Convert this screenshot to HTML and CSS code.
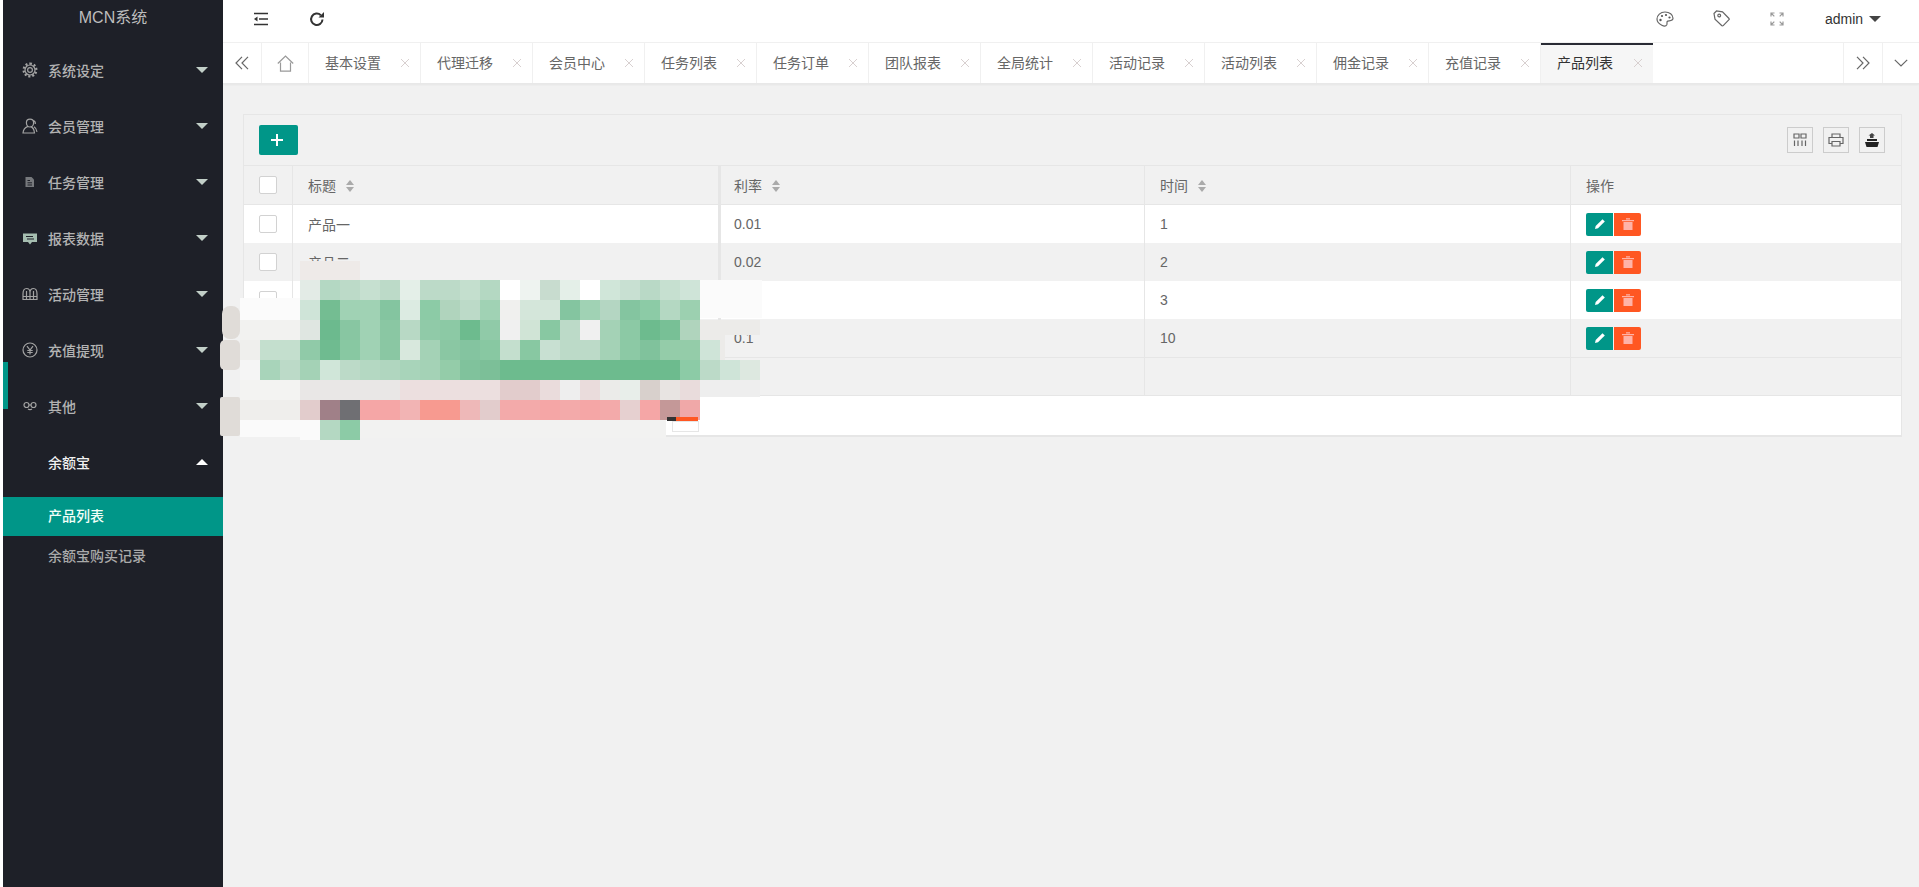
FILE: index.html
```html
<!DOCTYPE html>
<html lang="zh-CN">

<head>
    <meta charset="UTF-8">
    <title>MCN系统</title>
    <link rel="stylesheet" href="styles.css">
</head>

<body>
    <div class="side">
        <div class="logo">MCN系统</div>
        <ul class="nav">
            <li class="nav-item">
                <svg class="nav-ico" viewBox="0 0 16 16"><circle cx="8" cy="8" r="2.4"/><circle cx="8" cy="8" r="5"/><path stroke-width="2.2" stroke-dasharray="2 1.9" d="M8 1.6a6.4 6.4 0 1 1-.01 0"/></svg>
                <span>系统设定</span><i class="arrow"></i>
            </li>
            <li class="nav-item">
                <svg class="nav-ico" viewBox="0 0 16 16"><path d="M8 1.2c2.3 0 3.6 1.7 3.6 3.6S10.300 9 8 9 4.400 6.700 4.400 4.800 5.700 1.200 8 1.200zM5.800 8.400C3.300 9.400 1.300 11.500 1 15h11.500c-.3-3.500-1.600-5.600-4-6.600M11.500 2.500c1.500.6 2 2 1.800 3.500M12 8.800c1.600.9 2.700 2.800 3 5"/></svg>
                <span>会员管理</span><i class="arrow"></i>
            </li>
            <li class="nav-item">
                <svg class="nav-ico" viewBox="0 0 16 16"><path class="fill dim" d="M3.500 3h6l2.500 2.500V13H3.500z"/><path stroke="#1e2028" stroke-width="1" d="M5.500 6.500h2.500M5.500 8.800h4.500M5.500 11h4.500"/></svg>
                <span>任务管理</span><i class="arrow"></i>
            </li>
            <li class="nav-item">
                <svg class="nav-ico" viewBox="0 0 16 16"><path class="fill green" d="M1 3.500h14v8.500h-5l-2 2.500-2-2.500H1z"/><path stroke="#1e2028" d="M4 6.500h7M12 9H5"/></svg>
                <span>报表数据</span><i class="arrow"></i>
            </li>
            <li class="nav-item">
                <svg class="nav-ico" viewBox="0 0 16 16"><path d="M1 13.500V8c0-3 1.300-5.500 3.500-5.500S8 4 8 6.500C8 4 9.300 2.500 11.500 2.500S15 5 15 8v5.500zM8 6.500v7M4.500 5v8.500M11.500 5v8.500M1 10.500h14"/></svg>
                <span>活动管理</span><i class="arrow"></i>
            </li>
            <li class="nav-item">
                <svg class="nav-ico" viewBox="0 0 16 16"><circle cx="8" cy="8" r="7"/><path d="M5 4.200 8 8l3-3.800M8 8v4.500M5.300 8.500h5.400M5.300 10.500h5.400"/></svg>
                <span>充值提现</span><i class="arrow"></i>
            </li>
            <li class="nav-item">
                <svg class="nav-ico" viewBox="0 0 16 16"><circle cx="4.500" cy="7" r="2.500"/><circle cx="11.500" cy="7" r="2.500"/><path d="M7 7h2M6 11c1.300.8 2.700.8 4 0"/></svg>
                <span>其他</span><i class="arrow"></i>
            </li>
            <li class="nav-item is-open">
                <span>余额宝</span><i class="arrow up"></i>
            </li>
        </ul>
        <ul class="sub-nav">
            <li class="sub-item is-active">产品列表</li>
            <li class="sub-item">余额宝购买记录</li>
        </ul>
        <div class="nav-bar"></div>
    </div>

    <div class="main">
        <div class="top">
            <div class="top-cell">
                <svg class="ico-dark" width="16" height="14" viewBox="0 0 16 14"><path d="M1 1.500h14M6 7h9M1 12.500h14"/><path class="solid" d="M4.500 4.500v5L1 7z"/></svg>
            </div>
            <div class="top-cell">
                <svg class="ico-dark thick" width="16" height="16" viewBox="0 0 16 16"><path d="M13.500 8.500a5.700 5.700 0 1 1-1.700-4.300"/><path class="solid" d="M15 1v5.500H9.500z"/></svg>
            </div>
            <div class="top-gap"></div>
            <div class="top-cell">
                <svg class="ico-line" width="18" height="18" viewBox="0 0 18 18"><path d="M9 2c4.500 0 8 2.800 8 6.300 0 3-3.800 2.300-5.300 2.800-1.500.6-.2 2.200-.9 3.600-.8 1.500-3 1.500-5 .5C3 13.800 1 11.500 1 9c0-3.800 3.500-7 8-7z"/><circle class="solid" cx="4.500" cy="10" r="1.200"/><circle class="solid" cx="6" cy="6" r="1.100"/><circle class="solid" cx="10" cy="5" r="1.100"/><circle class="solid" cx="13.500" cy="7.500" r="1.100"/></svg>
            </div>
            <div class="top-cell">
                <svg class="ico-line" width="17" height="17" viewBox="0 0 17 17"><path d="M1 3.500 3.500 1l6 .8 6.500 6.700c.3.400.3.900 0 1.200l-5.800 6c-.4.400-.9.400-1.300 0L2 9.200z"/><circle cx="6.200" cy="5.500" r="1.400"/></svg>
            </div>
            <div class="top-cell">
                <svg class="ico-line light" width="14" height="14" viewBox="0 0 14 14"><path d="M1 4.500V1h3.500M1 1l3.300 3.300M13 4.500V1H9.500M13 1 9.700 4.300M1 9.500V13h3.500M1 13l3.300-3.300M13 9.500V13H9.500M13 13 9.700 9.700"/></svg>
            </div>
            <div class="user">admin<i class="caret"></i></div>
        </div>

        <div class="tabs">
            <div class="tab-btn">
                <svg class="ico-line" width="14" height="14" viewBox="0 0 14 14"><path d="M7 .8 1 7l6 6.200M13 .8 7 7l6 6.200"/></svg>
            </div>
            <div class="tab-home">
                <svg class="ico-line light" width="17" height="17" viewBox="0 0 17 17"><path d="M.8 8.500 8.500 1l7.700 7.500M3.500 7.500v8.700h10V7.500"/></svg>
            </div>
            <div class="tab">基本设置<i class="close"></i></div>
            <div class="tab">代理迁移<i class="close"></i></div>
            <div class="tab">会员中心<i class="close"></i></div>
            <div class="tab">任务列表<i class="close"></i></div>
            <div class="tab">任务订单<i class="close"></i></div>
            <div class="tab">团队报表<i class="close"></i></div>
            <div class="tab">全局统计<i class="close"></i></div>
            <div class="tab">活动记录<i class="close"></i></div>
            <div class="tab">活动列表<i class="close"></i></div>
            <div class="tab">佣金记录<i class="close"></i></div>
            <div class="tab">充值记录<i class="close"></i></div>
            <div class="tab is-active">产品列表<i class="close"></i></div>
            <div class="tab-rest"></div>
            <div class="tab-btn tab-next">
                <svg class="ico-line" width="14" height="14" viewBox="0 0 14 14"><path d="M1 .8 7 7l-6 6.200M7 .8 13 7l-6 6.200"/></svg>
            </div>
            <div class="tab-btn tab-more">
                <svg class="ico-line" width="14" height="8" viewBox="0 0 14 8"><path d="M.8.800 7 7 13.200.800"/></svg>
            </div>
        </div>

        <div class="content">
            <div class="card">
                <div class="toolbar">
                    <button class="btn-add">
                        <svg width="12" height="12" viewBox="0 0 12 12"><path d="M0 6h12M6 0v12"/></svg>
                    </button>
                    <div class="tools">
                        <span class="tool"><svg class="ico-line" width="14" height="14" viewBox="0 0 14 14"><path d="M1 1h5v4H1zM8 1h5v4H8zM1.500 7.500V13M5 7.500V13M9 7.500V13M12.500 7.500V13"/></svg></span>
                        <span class="tool"><svg class="ico-line" width="16" height="14" viewBox="0 0 16 14"><path d="M4 4V1h8v3M4 10.500H1V4.500h14v6h-3M4 8.500h8V13H4z"/></svg></span>
                        <span class="tool"><svg width="14" height="14" viewBox="0 0 14 14"><path fill="#222" d="M0 9h14l-1.500 5h-11zM2 8V6h10v2z"/><path fill="#444" d="M5 5V2.500H3.500L7 0l3 2.500H8.500V5z"/></svg></span>
                    </div>
                </div>
                <table class="grid">
                    <colgroup>
                        <col class="c-check"><col class="c-title"><col class="c-rate"><col class="c-time"><col>
                    </colgroup>
                    <thead>
                        <tr>
                            <th><i class="check"></i></th>
                            <th>标题<i class="sort"></i></th>
                            <th class="after-fixed">利率<i class="sort"></i></th>
                            <th>时间<i class="sort"></i></th>
                            <th>操作</th>
                        </tr>
                    </thead>
                    <tbody>
                        <tr>
                            <td><i class="check"></i></td>
                            <td>产品一</td>
                            <td class="after-fixed">0.01</td>
                            <td>1</td>
                            <td><span class="act edit"><svg width="12" height="12" viewBox="0 0 12 12"><path d="M1 11l.7-3L8.500 1.200l2.300 2.300L4 10.300z"/></svg></span><span class="act del"><svg width="12" height="12" viewBox="0 0 12 12"><path d="M0 2h12v1.200H0zM4 .3h4v1.200H4zM1.500 4h9v8h-9z"/></svg></span></td>
                        </tr>
                        <tr>
                            <td><i class="check"></i></td>
                            <td>产品二</td>
                            <td class="after-fixed">0.02</td>
                            <td>2</td>
                            <td><span class="act edit"><svg width="12" height="12" viewBox="0 0 12 12"><path d="M1 11l.7-3L8.500 1.200l2.300 2.300L4 10.300z"/></svg></span><span class="act del"><svg width="12" height="12" viewBox="0 0 12 12"><path d="M0 2h12v1.200H0zM4 .3h4v1.200H4zM1.500 4h9v8h-9z"/></svg></span></td>
                        </tr>
                        <tr>
                            <td><i class="check"></i></td>
                            <td>产品三</td>
                            <td class="after-fixed">0.03</td>
                            <td>3</td>
                            <td><span class="act edit"><svg width="12" height="12" viewBox="0 0 12 12"><path d="M1 11l.7-3L8.500 1.200l2.300 2.300L4 10.300z"/></svg></span><span class="act del"><svg width="12" height="12" viewBox="0 0 12 12"><path d="M0 2h12v1.200H0zM4 .3h4v1.200H4zM1.500 4h9v8h-9z"/></svg></span></td>
                        </tr>
                        <tr>
                            <td><i class="check"></i></td>
                            <td>产品四</td>
                            <td class="after-fixed">0.1</td>
                            <td>10</td>
                            <td><span class="act edit"><svg width="12" height="12" viewBox="0 0 12 12"><path d="M1 11l.7-3L8.500 1.200l2.300 2.300L4 10.300z"/></svg></span><span class="act del"><svg width="12" height="12" viewBox="0 0 12 12"><path d="M0 2h12v1.200H0zM4 .3h4v1.200H4zM1.500 4h9v8h-9z"/></svg></span></td>
                        </tr>
                        <tr class="blank">
                            <td></td><td></td><td class="after-fixed"></td><td></td><td></td>
                        </tr>
                    </tbody>
                </table>
                <div class="pager"></div>
            </div>
        </div>
    </div>

    <svg class="mosaic" viewBox="220 255 560 190" shape-rendering="crispEdges">
        <rect x="300" y="261" width="60" height="19" fill="#eeeae8"/>
        <rect x="240" y="298" width="60" height="22" fill="#fbfbfb"/>
        <rect x="240" y="320" width="60" height="20" fill="#f2f2f0"/>
        <rect x="240" y="340" width="60" height="20" fill="#efefed"/>
        <rect x="240" y="360" width="60" height="20" fill="#f5f5f5"/>
        <rect x="240" y="380" width="60" height="20" fill="#f3f3f2"/>
        <rect x="240" y="400" width="60" height="20" fill="#efeeec"/>
        <rect x="240" y="420" width="60" height="17" fill="#fafafa"/>
        <rect x="700" y="280" width="62" height="38" fill="#fbfbfb"/>
        <rect x="700" y="320" width="60" height="15" fill="#ecebe9"/>
        <rect x="700" y="335" width="25" height="25" fill="#ecebe9"/>
        <rect x="700" y="360" width="60" height="37" fill="#eeeeee"/>
        <rect x="360" y="420" width="306" height="18" fill="#f2f2f1"/>
        <g shape-rendering="auto" fill="#e0dcd8">
            <rect x="222" y="306" width="18" height="33" rx="8"/>
            <rect x="220" y="340" width="20" height="30" rx="5"/>
            <rect x="220" y="397" width="20" height="39" rx="2"/>
        </g>
        <g class="tiles">
            <g transform="translate(0 280)">
                <rect x="300" fill="#e3ebe6"/><rect x="320" fill="#b4d8c3"/><rect x="340" fill="#bcdac8"/><rect x="360" fill="#c6e0d0"/><rect x="380" fill="#bcdac8"/><rect x="400" fill="#e4efe8"/><rect x="420" fill="#bcdac8"/><rect x="440" fill="#bcdac8"/><rect x="460" fill="#c4dfce"/><rect x="480" fill="#b4d8c2"/><rect x="500" fill="#ffffff"/><rect x="520" fill="#eef3f0"/><rect x="540" fill="#c8dccf"/><rect x="560" fill="#e4efe8"/><rect x="580" fill="#ffffff"/><rect x="600" fill="#d0e6d9"/><rect x="620" fill="#c8e0d2"/><rect x="640" fill="#b9d9c6"/><rect x="660" fill="#c6e0d0"/><rect x="680" fill="#cfe4d8"/>
            </g>
            <g transform="translate(0 300)">
                <rect x="300" fill="#cfe4d8"/><rect x="320" fill="#74bd92"/><rect x="340" fill="#a0d2b4"/><rect x="360" fill="#a0d2b4"/><rect x="380" fill="#84c5a0"/><rect x="400" fill="#dcebe2"/><rect x="420" fill="#8ccba6"/><rect x="440" fill="#b0d4bd"/><rect x="460" fill="#bcdac8"/><rect x="480" fill="#a0d2b4"/><rect x="500" fill="#f0f0ee"/><rect x="520" fill="#d4e6da"/><rect x="540" fill="#d4e6da"/><rect x="560" fill="#84c5a0"/><rect x="580" fill="#a0d2b4"/><rect x="600" fill="#b4d6c2"/><rect x="620" fill="#84c5a0"/><rect x="640" fill="#8ccba6"/><rect x="660" fill="#b4d8c2"/><rect x="680" fill="#9cd0b0"/>
            </g>
            <g transform="translate(0 320)">
                <rect x="300" fill="#dfe6e1"/><rect x="320" fill="#6cba8e"/><rect x="340" fill="#88c6a2"/><rect x="360" fill="#a0d2b4"/><rect x="380" fill="#8ac7a3"/><rect x="400" fill="#b8d9c5"/><rect x="420" fill="#90caa8"/><rect x="440" fill="#8cc9a5"/><rect x="460" fill="#6dbb8e"/><rect x="480" fill="#90caa8"/><rect x="500" fill="#f0f0f0"/><rect x="520" fill="#d0e4d6"/><rect x="540" fill="#88c8a2"/><rect x="560" fill="#bcdac8"/><rect x="580" fill="#f0f0f0"/><rect x="600" fill="#a4d2b6"/><rect x="620" fill="#8cc9a5"/><rect x="640" fill="#6dbb8e"/><rect x="660" fill="#78c096"/><rect x="680" fill="#b0d4bd"/>
            </g>
            <g transform="translate(0 340)">
                <rect x="260" fill="#c4dfce"/><rect x="280" fill="#c4dfce"/><rect x="300" fill="#90caa8"/><rect x="320" fill="#6fbb90"/><rect x="340" fill="#88c8a2"/><rect x="360" fill="#a0d2b4"/><rect x="380" fill="#8ac7a3"/><rect x="400" fill="#d8e8dd"/><rect x="420" fill="#a4d2b6"/><rect x="440" fill="#8ac7a3"/><rect x="460" fill="#84c4a0"/><rect x="480" fill="#88c8a2"/><rect x="500" fill="#c4dfce"/><rect x="520" fill="#88c8a2"/><rect x="540" fill="#c8e0d2"/><rect x="560" fill="#bcdac8"/><rect x="580" fill="#bcdac8"/><rect x="600" fill="#a4d2b6"/><rect x="620" fill="#8cc9a5"/><rect x="640" fill="#80c29c"/><rect x="660" fill="#94cca9"/><rect x="680" fill="#94cca9"/><rect x="700" fill="#cfe4d8"/>
            </g>
            <g transform="translate(0 360)">
                <rect x="260" fill="#a8d4ba"/><rect x="280" fill="#bcdac8"/><rect x="300" fill="#a4d2b6"/><rect x="320" fill="#d0e6d9"/><rect x="340" fill="#bcdac8"/><rect x="360" fill="#b4d8c2"/><rect x="380" fill="#b0d6bf"/><rect x="400" fill="#a8d4ba"/><rect x="420" fill="#a4d2b6"/><rect x="440" fill="#94cca9"/><rect x="460" fill="#80c29c"/><rect x="480" fill="#7cbf98"/><rect x="500" fill="#6dbb8e"/><rect x="520" fill="#6dbb8e"/><rect x="540" fill="#6dbb8e"/><rect x="560" fill="#6dbb8e"/><rect x="580" fill="#6dbb8e"/><rect x="600" fill="#6dbb8e"/><rect x="620" fill="#6dbb8e"/><rect x="640" fill="#6dbb8e"/><rect x="660" fill="#6dbb8e"/><rect x="680" fill="#8ccba6"/><rect x="700" fill="#bcdac8"/><rect x="720" fill="#cfe4d8"/><rect x="740" fill="#dde8e0"/>
            </g>
            <g transform="translate(0 380)">
                <rect x="300" fill="#e9e7e6"/><rect x="320" fill="#e9e7e6"/><rect x="340" fill="#e9e7e6"/><rect x="360" fill="#e9e7e6"/><rect x="380" fill="#e9e7e6"/><rect x="400" fill="#ecdfdf"/><rect x="420" fill="#ecdfdf"/><rect x="440" fill="#ecdfdf"/><rect x="460" fill="#ecdfdf"/><rect x="480" fill="#ecdfdf"/><rect x="500" fill="#e2cccc"/><rect x="520" fill="#e2cccc"/><rect x="540" fill="#eadcdc"/><rect x="560" fill="#eeeeee"/><rect x="580" fill="#eadcdc"/><rect x="600" fill="#ebebe9"/><rect x="620" fill="#e8eeea"/><rect x="640" fill="#d8d0cc"/><rect x="660" fill="#e8e4e2"/><rect x="680" fill="#e9dcdc"/>
            </g>
            <g transform="translate(0 400)">
                <rect x="300" fill="#e2cccc"/><rect x="320" fill="#a08088"/><rect x="340" fill="#6f6f73"/><rect x="360" fill="#f5a6a6"/><rect x="380" fill="#f5a6a6"/><rect x="400" fill="#f2b4b4"/><rect x="420" fill="#f79a90"/><rect x="440" fill="#f79a90"/><rect x="460" fill="#eeb8b8"/><rect x="480" fill="#e2cccc"/><rect x="500" fill="#f3aaaa"/><rect x="520" fill="#f3aaaa"/><rect x="540" fill="#f5a6a6"/><rect x="560" fill="#f3aaaa"/><rect x="580" fill="#f5a6a6"/><rect x="600" fill="#f3aaaa"/><rect x="620" fill="#e6d0d0"/><rect x="640" fill="#f5a6a6"/><rect x="660" fill="#c49898"/><rect x="680" fill="#f0a8a8"/>
            </g>
            <g transform="translate(0 420)">
                <rect x="300" fill="#fafafa"/><rect x="320" fill="#b4d8c2"/><rect x="340" fill="#8ccba6"/>
            </g>
        </g>
        <rect x="672" y="421" width="26" height="10" fill="#ffffff" stroke="#e6e6e6"/>
        <rect x="676" y="417" width="22" height="4" fill="#ff5722"/>
        <rect x="667" y="417" width="9" height="4" fill="#333333"/>
    </svg>
</body>

</html>
```

FILE: styles.css
```css
body,
html {
    margin: 0;
    height: 100%;
}

body {
    position: relative;
    display: flex;
    padding-left: 3px;
    box-sizing: border-box;
    overflow: hidden;
    font-family: "Liberation Sans", "Noto Sans CJK SC", sans-serif;
    font-size: 14px;
    color: #666;
    background-color: #fff;
}

ul {
    margin: 0;
    padding: 0;
    list-style-type: none;
}

i {
    font-style: normal;
}

svg {
    display: block;
}

/* 左侧菜单 */
.side {
    position: relative;
    flex: none;
    width: 220px;
    background-color: #1e2028;
}

.logo {
    height: 42px;
    padding-top: 7px;
    box-sizing: border-box;
    font-size: 16px;
    line-height: 22px;
    text-align: center;
    color: #bdbdbd;
}

.nav-item {
    display: flex;
    align-items: center;
    height: 56px;
    padding-left: 45px;
    padding-right: 15px;
    font-weight: 500;
    color: #b3b3b3;
}

.nav-ico {
    width: 16px;
    height: 16px;
    margin-left: -26px;
    margin-right: 10px;
    fill: none;
    stroke: #a3a3a3;
    stroke-width: 1.200;
}

.nav-ico .fill {
    fill: #9a9a9a;
    stroke: none;
}

.nav-ico .dim {
    fill: #77797d;
}

.nav-ico .green {
    fill: #a5bdb0;
}

.arrow {
    margin-left: auto;
    width: 0;
    height: 0;
    border-style: solid;
    border-width: 6px 6px 0;
    border-color: #c2cfc8 transparent transparent;
}

.arrow.up {
    border-width: 0 6px 6px;
    border-color: transparent transparent #fff;
}

.nav-item.is-open {
    color: #f0f0f0;
}

.sub-nav {
    padding-top: 7px;
}

.sub-item {
    height: 39px;
    padding-left: 45px;
    font-weight: 500;
    line-height: 39px;
    color: #aaa;
}

.sub-item.is-active {
    height: 39px;
    margin-bottom: 1px;
    color: #f2fff8;
    background-color: #009688;
}

.nav-bar {
    position: absolute;
    left: 0;
    top: 362px;
    width: 5px;
    height: 47px;
    background-color: #009688;
}

/* 顶部 */
.main {
    display: flex;
    flex: 1;
    flex-direction: column;
    min-width: 0;
    background-color: #f1f1f1;
}

.top {
    display: flex;
    flex: none;
    align-items: center;
    height: 37px;
    padding: 0 0 5px 10px;
    border-bottom: 1px solid #f0f0f0;
    background-color: #fff;
}

.top-cell {
    display: flex;
    align-items: center;
    justify-content: center;
    width: 56px;
    height: 100%;
}

.top-gap {
    flex: 1;
}

.user {
    display: flex;
    align-items: center;
    width: 114px;
    padding-left: 20px;
    box-sizing: border-box;
    color: #333;
}

.caret {
    margin-left: 6px;
    border-style: solid;
    border-width: 6px 6px 0;
    border-color: #444 transparent transparent;
}

.ico-dark,
.ico-line {
    fill: none;
    stroke-width: 1.500;
}

.ico-dark {
    stroke: #333;
}

.ico-dark.thick {
    stroke-width: 2;
}

.ico-dark .solid {
    fill: #333;
    stroke: none;
}

.ico-line {
    stroke: #666;
    stroke-width: 1.200;
}

.ico-line.light {
    stroke: #999;
}

.ico-line .solid {
    fill: #555;
    stroke: none;
}

/* 标签栏 */
.tabs {
    display: flex;
    flex: none;
    height: 40px;
    border-bottom: 1px solid #e8e8e8;
    box-shadow: 0 1px 2px rgba(0, 0, 0, .05);
    background-color: #fff;
}

.tab-btn,
.tab-home {
    display: flex;
    flex: none;
    align-items: center;
    justify-content: center;
    box-sizing: border-box;
    width: 39px;
    border-right: 1px solid #f0f0f0;
}

.tab-home {
    width: 47px;
}

.tab {
    position: relative;
    flex: none;
    width: 112px;
    height: 40px;
    padding-left: 16px;
    box-sizing: border-box;
    border-right: 1px solid #f0f0f0;
    line-height: 40px;
    color: #666;
}

.tab.is-active {
    border-top: 2px solid #292b34;
    border-right: 0;
    line-height: 36px;
    color: #333;
    background-color: #f6f6f6;
}

.close {
    position: absolute;
    right: 11px;
    top: 16px;
    width: 8px;
    height: 8px;
    background:
        linear-gradient(45deg, transparent 44%, #d8d0d0 44%, #d8d0d0 56%, transparent 56%),
        linear-gradient(-45deg, transparent 44%, #d8d0d0 44%, #d8d0d0 56%, transparent 56%);
}

.is-active .close {
    top: 14px;
}

.tab-rest {
    flex: 1;
}

.tab-next {
    width: 40px;
    border-left: 1px solid #f0f0f0;
}

.tab-more {
    width: 36px;
    border-right: 0;
}

/* 内容区 */
.content {
    flex: 1;
    padding: 30px 17px 0 20px;
}

.card {
    border: 1px solid #e6e6e6;
    border-bottom-width: 2px;
}

.toolbar {
    display: flex;
    align-items: center;
    justify-content: space-between;
    height: 50px;
    padding: 0 16px 0 15px;
    border-bottom: 1px solid #e6e6e6;
}

.btn-add {
    display: flex;
    align-items: center;
    justify-content: center;
    width: 39px;
    height: 30px;
    padding: 0 3px 0 0;
    border: 0;
    border-radius: 2px;
    background-color: #009688;
}

.btn-add svg {
    fill: none;
    stroke: #fff;
    stroke-width: 2;
}

.tools {
    display: flex;
    gap: 10px;
}

.tool {
    display: flex;
    align-items: center;
    justify-content: center;
    width: 26px;
    height: 26px;
    border: 1px solid #ccc;
    box-sizing: border-box;
}

.grid {
    width: 100%;
    table-layout: fixed;
    border-collapse: separate;
    border-spacing: 0;
}

.c-check {
    width: 49px;
}

.c-title {
    width: 426px;
}

.c-rate {
    width: 426px;
}

.c-time {
    width: 426px;
}

.grid th,
.grid td {
    padding: 0 15px;
    box-sizing: border-box;
    border-right: 1px solid #e6e6e6;
    font-weight: 400;
    text-align: left;
    color: #666;
}

.grid th:last-child,
.grid td:last-child {
    border-right: 0;
}

.grid th {
    height: 39px;
    border-bottom: 1px solid #e6e6e6;
}

.grid td {
    height: 38px;
    background-color: #fff;
}

.grid tr:nth-child(even) td {
    background-color: #f1f1f1;
}

.grid tr.blank td {
    height: 39px;
    border-top: 1px solid #e6e6e6;
    border-bottom: 1px solid #e6e6e6;
    background-color: #f1f1f1;
}

.grid .after-fixed {
    box-shadow: inset 2px 0 0 #e6e6e6;
}

.check {
    display: block;
    width: 18px;
    height: 18px;
    box-sizing: border-box;
    border: 1px solid #d2d2d2;
    border-radius: 2px;
    background-color: #fff;
}

.sort {
    display: inline-block;
    position: relative;
    width: 9px;
    height: 12px;
    margin-left: 10px;
    vertical-align: -1px;
}

.sort::before,
.sort::after {
    content: "";
    position: absolute;
    left: 0;
    border-style: solid;
    border-color: transparent;
    border-width: 5px 4.5px 0;
}

.sort::before {
    top: 0;
    border-width: 0 4.5px 5px;
    border-bottom-color: #aaa;
}

.sort::after {
    bottom: 0;
    border-top-color: #aaa;
}

.act {
    display: inline-flex;
    align-items: center;
    justify-content: center;
    width: 27px;
    height: 23px;
    vertical-align: middle;
}

.edit {
    border-radius: 2px 0 0 2px;
    background-color: #009688;
    fill: #fff;
}

.del {
    margin-left: 1px;
    border-radius: 0 2px 2px 0;
    background-color: #ff5722;
    fill: #ffb3a8;
}

.pager {
    height: 39px;
    background-color: #fff;
}

/* 打码区域 */
.mosaic {
    position: absolute;
    left: 220px;
    top: 255px;
    width: 560px;
    height: 190px;
}

.tiles rect {
    width: 20px;
    height: 20px;
}
```
